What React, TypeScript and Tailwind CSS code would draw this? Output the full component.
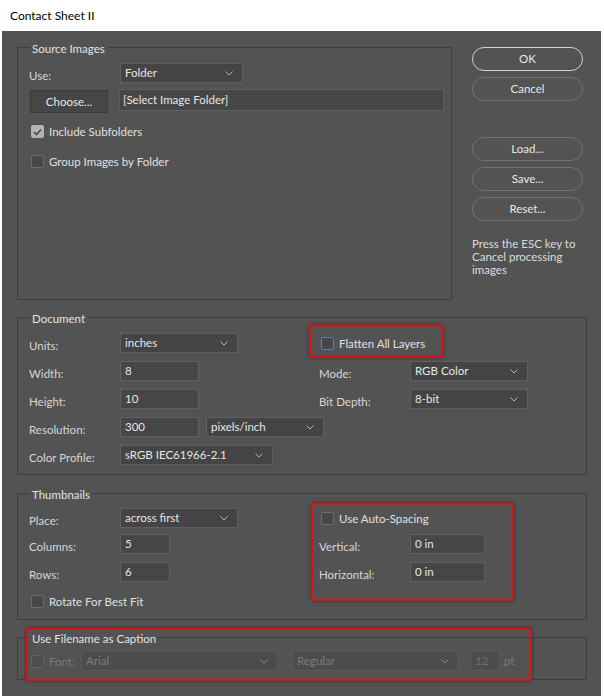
import React from "react";

const font = { fontFamily: "Lato, 'Liberation Sans', Arial, sans-serif" };

function Chevron({ dim }: { dim?: boolean }) {
  return (
    <svg width="8" height="5" viewBox="0 0 8 5" className="shrink-0">
      <path d="M0.5 0.5 L4 4 L7.5 0.5" fill="none" stroke={dim ? "#8a8a8a" : "#b8b8b8"} strokeWidth="1" />
    </svg>
  );
}

function Select({ value, w, dim }: { value: string; w: string; dim?: boolean }) {
  return (
    <div
      className={`shrink-0 flex items-center justify-between h-[20px] ${w} pl-[4px] pr-[9px] border ${
        dim ? "bg-[#4c4c4c] border-[#595959] text-[#7b7b7b]" : "bg-[#444444] border-[#5f5f5f] text-[#e6e6e6]"
      }`}
    >
      <span>{value}</span>
      <Chevron dim={dim} />
    </div>
  );
}

function Field({ value, w, dim }: { value: string; w: string; dim?: boolean }) {
  return (
    <div
      className={`shrink-0 flex items-center h-[20px] ${w} px-[4px] border ${
        dim ? "bg-[#4c4c4c] border-[#595959] text-[#6f6f6f]" : "bg-[#464646] border-[#606060] text-[#e6e6e6]"
      }`}
    >
      {value}
    </div>
  );
}

function Check({ checked, focus, dim, label }: { checked?: boolean; focus?: boolean; dim?: boolean; label?: string }) {
  return (
    <div className="flex items-center h-[13px] ml-[2px]">
      <div
        className={`shrink-0 w-[13px] h-[13px] rounded-[2px] border flex items-center justify-center ${
          checked
            ? "bg-[#b3b3b3] border-[#b3b3b3]"
            : focus
            ? "bg-[#474747] border-[#4f82c8]"
            : dim
            ? "bg-[#4e4e4e] border-[#626262]"
            : "bg-[#474747] border-[#6c6c6c]"
        }`}
      >
        {checked && (
          <svg width="9" height="8" viewBox="0 0 9 8">
            <path d="M1 4 L3.5 6.5 L8 1.5" fill="none" stroke="#4a4a4a" strokeWidth="1.6" />
          </svg>
        )}
      </div>
      {label && <span className="ml-[5px] pt-[1px] text-[#e0e0e0]">{label}</span>}
    </div>
  );
}

function Group({ title, className, children }: { title: string; className: string; children: React.ReactNode }) {
  return (
    <div className={`relative border border-[#3e3e3e] ${className}`}>
      <span className="absolute left-[12px] top-[-7px] px-[2px] bg-[#535353] text-[#e2e2e2] leading-[15px]">
        {title}
      </span>
      {children}
    </div>
  );
}

function Row({ label, children, className = "" }: { label: string; children: React.ReactNode; className?: string }) {
  return (
    <div className={`flex items-center h-[20px] ${className}`}>
      <span className="shrink-0 w-[91px] pt-[5px] text-[#d6d6d6]">{label}</span>
      {children}
    </div>
  );
}

function Pill({ label, primary, className = "" }: { label: string; primary?: boolean; className?: string }) {
  return (
    <div
      className={`h-[24px] w-[111px] rounded-full border flex items-center justify-center text-[#e8e8e8] ${
        primary ? "border-[#d2d2d2]" : "border-[#727272]"
      } ${className}`}
    >
      {label}
    </div>
  );
}

function RedBox({ className }: { className: string }) {
  return <div className={`absolute border-2 border-[#d91414] shadow-[0_0_3px_rgba(0,0,0,0.45)] ${className}`} />;
}

export default function App() {
  return (
    <div className="w-[604px] h-[698px] bg-white flex flex-col text-[11.5px]" style={font}>
      <div className="h-[31px] flex items-center pl-[10px] text-[12px] text-black">Contact Sheet II</div>

      <div className="flex-1 ml-[2px] mr-[3px] mb-[2px] bg-[#535353] pl-[15px] pt-[16px]">
        {/* top row */}
        <div className="flex">
          <Group title="Source Images" className="w-[435px] h-[253px] pl-[11px] pt-[15px]">
            <Row label="Use:">
              <Select value="Folder" w="w-[123px]" />
            </Row>
            <div className="flex items-start mt-[6px]">
              <div className="mt-[1px] ml-[1px] w-[78px] h-[23px] bg-[#464646] border border-[#3a3a3a] flex items-center justify-center text-[#e6e6e6]">
                Choose...
              </div>
              <div className="ml-[11px] w-[325px] h-[22px] bg-[#464646] border border-[#5e5e5e] flex items-center px-[3px] text-[#e6e6e6]">
                [Select Image Folder]
              </div>
            </div>
            <div className="mt-[12px]">
              <Check checked label="Include Subfolders" />
            </div>
            <div className="mt-[17px]">
              <Check label="Group Images by Folder" />
            </div>
          </Group>

          <div className="ml-[20px] flex flex-col">
            <Pill label="OK" primary />
            <Pill label="Cancel" className="mt-[6px]" />
            <Pill label="Load..." className="mt-[36px]" />
            <Pill label="Save..." className="mt-[6px]" />
            <Pill label="Reset..." className="mt-[6px]" />
            <p className="mt-[16px] leading-[13px] text-[#dcdcdc] w-[112px]">
              Press the ESC key to Cancel processing images
            </p>
          </div>
        </div>

        {/* document */}
        <Group title="Document" className="mt-[17px] w-[570px] h-[158px] pl-[11px] pt-[15px]">
          <div className="flex">
            <div className="shrink-0 w-[290px] flex flex-col gap-[8px]">
              <Row label="Units:">
                <Select value="inches" w="w-[118px]" />
              </Row>
              <Row label="Width:">
                <Field value="8" w="w-[79px]" />
              </Row>
              <Row label="Height:">
                <Field value="10" w="w-[79px]" />
              </Row>
              <Row label="Resolution:">
                <Field value="300" w="w-[79px]" />
                <div className="shrink-0 ml-[7px]">
                  <Select value="pixels/inch" w="w-[118px]" />
                </div>
              </Row>
              <Row label="Color Profile:">
                <Select value="sRGB IEC61966-2.1" w="w-[153px]" />
              </Row>
            </div>
            <div className="flex flex-col gap-[8px]">
              <div className="h-[20px] flex items-center">
                <Check focus label="Flatten All Layers" />
              </div>
              <Row label="Mode:">
                <Select value="RGB Color" w="w-[118px]" />
              </Row>
              <Row label="Bit Depth:">
                <Select value="8-bit" w="w-[118px]" />
              </Row>
            </div>
          </div>
          <RedBox className="left-[291px] top-[7px] w-[134px] h-[33px]" />
        </Group>

        {/* thumbnails */}
        <Group title="Thumbnails" className="mt-[18px] w-[570px] h-[127px] pl-[11px] pt-[14px]">
          <div className="flex">
            <div className="shrink-0 w-[290px] flex flex-col">
              <Row label="Place:">
                <Select value="across first" w="w-[118px]" />
              </Row>
              <Row label="Columns:" className="mt-[6px]">
                <Field value="5" w="w-[50px]" />
              </Row>
              <Row label="Rows:" className="mt-[8px]">
                <Field value="6" w="w-[50px]" />
              </Row>
              <div className="mt-[13px]">
                <Check label="Rotate For Best Fit" />
              </div>
            </div>
            <div className="flex flex-col">
              <div className="h-[20px] flex items-center">
                <Check label="Use Auto-Spacing" />
              </div>
              <Row label="Vertical:" className="mt-[6px]">
                <Field value="0 in" w="w-[75px]" />
              </Row>
              <Row label="Horizontal:" className="mt-[8px]">
                <Field value="0 in" w="w-[75px]" />
              </Row>
            </div>
          </div>
          <RedBox className="left-[293px] top-[9px] w-[203px] h-[98px]" />
        </Group>

        {/* caption */}
        <Group title="Use Filename as Caption" className="mt-[17px] w-[570px] h-[43px] pl-[11px] pt-[13px]">
          <div className="flex items-center h-[20px]">
            <Check dim />
            <span className="ml-[5px] w-[32px] pt-[1px] text-[#7a7a7a]">Font:</span>
            <Select value="Arial" w="w-[197px]" dim />
            <div className="ml-[14px]">
              <Select value="Regular" w="w-[167px]" dim />
            </div>
            <div className="ml-[11px]">
              <Field value="12" w="w-[30px]" dim />
            </div>
            <span className="ml-[4px] text-[#7a7a7a]">pt</span>
          </div>
          <RedBox className="left-[8px] top-[-10px] w-[506px] h-[53px]" />
        </Group>
      </div>
    </div>
  );
}
